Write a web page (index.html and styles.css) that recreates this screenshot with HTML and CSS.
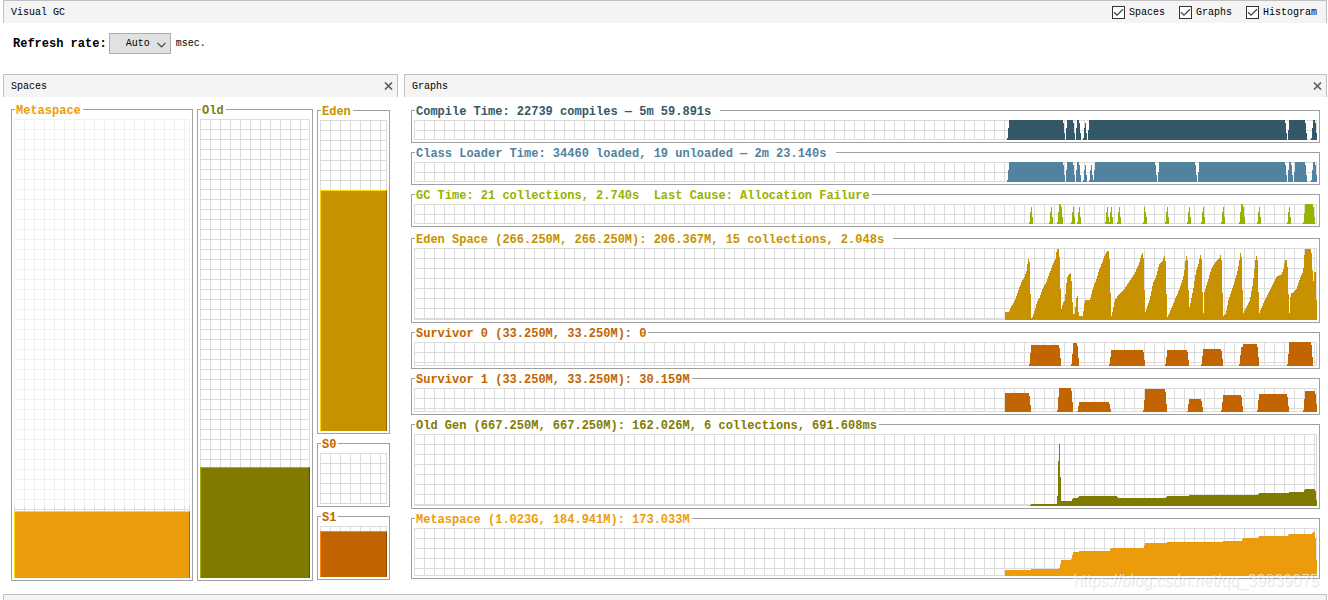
FILE: index.html
```html
<!DOCTYPE html>
<html lang="en">
<head>
<meta charset="utf-8">
<title>Visual GC</title>
<link rel="stylesheet" href="styles.css">
</head>
<body>
<div class="app">
  <header class="bar">
    <h1 class="bar-title">Visual GC</h1>
    <div class="toggles">
      <label class="toggle"><input class="check" type="checkbox" checked>Spaces</label>
      <label class="toggle"><input class="check" type="checkbox" checked>Graphs</label>
      <label class="toggle"><input class="check" type="checkbox" checked>Histogram</label>
    </div>
  </header>

  <div class="toolbar">
    <label class="rate-label" for="rate">Refresh rate:</label>
    <span class="combo">
      <select class="combo-select" id="rate"><option>Auto</option><option>100</option><option>500</option></select>
      <svg class="combo-arrow" width="9" height="6" viewBox="0 0 9 6" aria-hidden="true"><path d="M.5.8 4.5 4.8 8.5.8" fill="none" stroke="#444" stroke-width="1.2"/></svg>
    </span>
    <span>msec.</span>
  </div>

  <main class="panels">
    <section class="panel">
      <div class="bar">
        <h2 class="bar-title">Spaces</h2>
        <button class="close" type="button" aria-label="Close Spaces"><svg width="9" height="8" viewBox="0 0 9 8"><path d="M1 .5 8 7.5M8 .5 1 7.5" stroke="#606060" stroke-width="1.7"/></svg></button>
      </div>
      <div class="spaces">
        <fieldset class="group meta">
          <legend class="caption">Metaspace</legend>
          <div class="plot reserved"><div class="plot committed" style="height:15.7%"></div><div class="fill" style="height:14.6%"></div></div>
        </fieldset>
        <fieldset class="group old">
          <legend class="caption">Old</legend>
          <div class="plot"><div class="fill" style="height:24.2%"></div></div>
        </fieldset>
        <div class="young">
          <fieldset class="group eden">
            <legend class="caption">Eden</legend>
            <div class="plot"><div class="fill" style="height:77.5%"></div></div>
          </fieldset>
          <fieldset class="group survivor">
            <legend class="caption">S0</legend>
            <div class="plot"></div>
          </fieldset>
          <fieldset class="group survivor">
            <legend class="caption">S1</legend>
            <div class="plot"><div class="fill" style="height:90.2%"></div></div>
          </fieldset>
        </div>
      </div>
    </section>

    <section class="panel">
      <div class="bar">
        <h2 class="bar-title">Graphs</h2>
        <button class="close" type="button" aria-label="Close Graphs"><svg width="9" height="8" viewBox="0 0 9 8"><path d="M1 .5 8 7.5M8 .5 1 7.5" stroke="#606060" stroke-width="1.7"/></svg></button>
      </div>
      <div class="graphs">
        <div class="graph-set">
          <fieldset class="group compile">
            <legend class="caption">Compile Time: 22739 compiles — 5m 59.891s </legend>
            <div class="plot short"><svg class="series" width="317" height="20" viewBox="0 0 951 60"><path d="M21 60V54H24V24H27V0H189V9H192V39H195V60zM198 60V24H201V0H219V9H222V39H225V60zM228 60V24H231V0H237V9H240V39H243V60zM249 60V54H252V24H255V9H258V39H261V60zM264 60V30H267V0H855V9H858V39H861V60zM864 60V30H867V0H915V9H918V39H921V60zM933 60V54H936V24H939V0H945V9H948V39H951V60z"/></svg></div>
          </fieldset>
          <fieldset class="group loader">
            <legend class="caption">Class Loader Time: 34460 loaded, 19 unloaded — 2m 23.140s </legend>
            <div class="plot short"><svg class="series" width="317" height="20" viewBox="0 0 951 60"><path d="M21 60V54H24V24H27V0H189V9H192V39H195V60zM198 60V24H201V0H219V9H222V39H225V60zM228 60V24H231V0H237V9H240V39H243V60zM249 60V54H252V24H255V9H258V39H261V60zM267 60V54H270V24H273V9H276V39H279V54H282V24H285V0H465V9H468V39H471V60zM474 60V30H477V0H585V9H588V39H591V60zM594 60V30H597V0H855V9H858V39H861V60zM864 60V24H867V0H873V9H876V39H879V60zM882 60V30H885V0H915V9H918V39H921V60zM933 60V54H936V24H939V0H945V9H948V39H951V60z"/></svg></div>
          </fieldset>
          <fieldset class="group gc">
            <legend class="caption">GC Time: 21 collections, 2.740s  Last Cause: Allocation Failure</legend>
            <div class="plot short"><svg class="series" width="317" height="20" viewBox="0 0 951 60"><path d="M87 60v-6h3v-30h3v-15h3v30h3v21zM147 60v-6h3v-30h3v-15h3v30h3v21zM171 60v-6h3v-30h3V0h6v9h3v30h3v21zM213 60v-6h3v-30h3v-15h3v30h3v21zM231 60v-6h3v-30h3v-15h3v30h3v21zM315 60v-6h3v-30h3v-15h3v30h3v21zM327 60v-6h3v-30h3v-15h3v30h3v21zM351 60v-6h3v-30h3v-15h3v30h3v21zM429 60v-6h3v-45h3v15h3v15h3v21zM495 60v-6h3v-30h3v-15h3v30h3v21zM561 60v-6h3v-30h3v-15h3v30h3v21zM603 60v-6h3v-30h3v-15h3v30h3v21zM663 60v-6h3v-30h3v-15h3v30h3v21zM717 60v-6h3v-30h3V0h6v9h3v30h3v21zM771 60v-6h3v-30h3v-15h3v30h3v21zM861 60v-6h3v-30h3v-15h3v30h3v21zM909 60v-6h3V27h3V0h24v9h3v30h3v21z"/></svg></div>
          </fieldset>
        </div>
        <div class="graph-set">
          <fieldset class="group eden">
            <legend class="caption">Eden Space (266.250M, 266.250M): 206.367M, 15 collections, 2.048s </legend>
            <div class="plot tall"><svg class="series" width="317" height="72" viewBox="0 0 951 216"><path d="M15 216V192H27L33 177L45 158L54 129L66 98L72 91L81 66L84 33H87V42H90V138H93V210L99 204L105 186L111 162L120 147L129 118L138 107L150 72L159 48L166 36L171 3H177V27H180V123H183V189L189 165L195 156L198 120L201 90L204 84L211 75H214V87L217 150L219 198H225L228 159L231 144H234V180L237 204H249L252 174L255 156H270L276 132L282 111L290 93L297 66L306 46L315 21L321 9H327V33H330V135H333V210L339 186L345 156L350 148L372 124L390 97L405 75L417 47L426 15H429V30H432V126H435V195L450 153L459 106L468 87L477 50L489 36L492 24H495V39H498V138H501V210L507 198L522 162L540 120L549 93L555 57L558 24H561V36H564V126H567V186L570 171L579 129L588 72L597 44L600 21H603V33H606V132H609V195H612V138L621 107L633 66L645 44L660 27V21H663V36H666V135H669V207L678 195L687 150L699 117L711 75L718 42L720 15H723V27H726V126H729V198L735 186L750 156L759 105L765 48L768 24H771V36H774V132H777V198L783 183L795 156L813 120L828 90L834 83L843 81L850 66L855 36H861V57H864V138H867V195H870V162L873 135H879L891 120L903 84L910 72V66L915 3H933V15H936V66H939V99H942V72H948V156H951V216z"/></svg></div>
          </fieldset>
          <fieldset class="group survivor">
            <legend class="caption">Survivor 0 (33.250M, 33.250M): 0</legend>
            <div class="plot medium"><svg class="series" width="317" height="24" viewBox="0 0 951 72"><path d="M87 72V66H90V33H93V9H177V18H180V48H183V72zM213 72V66H216V36H219V3H231V12H234V48H237V72zM327 72V66H330V45H333V24H429V30H432V54H435V72zM495 72V66H498V45H501V24H561V30H564V54H567V72zM603 72V66H606V42H609V21H663V27H666V51H669V72zM717 72V66H720V39H723V15H729V6H771V15H774V45H777V72zM861 72V66H864V36H867V0H933V9H936V45H939V72z"/></svg></div>
          </fieldset>
          <fieldset class="group survivor">
            <legend class="caption">Survivor 1 (33.250M, 33.250M): 30.159M</legend>
            <div class="plot medium"><svg class="series" width="317" height="24" viewBox="0 0 951 72"><path d="M15 72V15H87V24H90V51H93V72zM171 72V66H174V27H177V0H213V9H216V42H219V72zM231 72V69H234V54H237V42H327V48H330V63H333V72zM429 72V66H432V36H435V3H495V12H498V48H501V72zM561 72V69H564V48H567V33H603V39H606V57H609V72zM663 72V66H666V42H669V21H723V27H726V54H729V72zM771 72V66H774V36H777V18H861V27H864V54H867V72zM909 72V66H912V33H915V9H945V18H948V48H951V72z"/></svg></div>
          </fieldset>
          <fieldset class="group old">
            <legend class="caption">Old Gen (667.250M, 667.250M): 162.026M, 6 collections, 691.608ms</legend>
            <div class="plot tall"><svg class="series" width="317" height="72" viewBox="0 0 951 216"><path d="M90 216V213H93V210H171V186H174V81H177V30H180V129H183V201H216V195H219V192H234V189H237V186H351V189H354V192H498V189H501V186H567V183H774V180H777V177H867V174H912V168H915V165H945V171H948V198H951V216z"/></svg></div>
          </fieldset>
          <fieldset class="group meta">
            <legend class="caption">Metaspace (1.023G, 184.941M): 173.033M</legend>
            <div class="plot large"><svg class="series" width="317" height="48" viewBox="0 0 951 144"><path d="M15 144V126H93V123H177V120H180V108H183V96H213V93H216V81H219V72H237V69H330V63H333V60H432V51H435V45H501V42H669V39H726V33H729V30H774V27H777V24H864V21H867V18H936V15H939V12H945V30H948V96H951V144z"/></svg></div>
          </fieldset>
        </div>
      </div>
    </section>
  </main>

  <footer class="next-panel"></footer>
  <span class="watermark">https://blog.csdn.net/qq_39839075</span>
</div>
</body>
</html>
```

FILE: styles.css
```css
* {
  box-sizing: border-box;
}

body {
  margin: 0;
  background: #fff;
  color: #000;
  font: 10px/14px "Liberation Mono", monospace;
}

.app {
  position: relative;
  display: flex;
  flex-direction: column;
  min-height: 100vh;
  padding: 0 1px 0 3px;
}

.bar {
  display: flex;
  align-items: center;
  justify-content: space-between;
  height: 23px;
  padding: 1px 4px 0 7px;
  border: 1px solid #c0c0c0;
  border-bottom: 0;
  background: #f4f4f4;
}

.bar-title {
  margin: 0;
  padding-top: 1px;
  font-size: 10px;
  font-weight: normal;
}

.toggles {
  display: flex;
  gap: 14px;
  padding-right: 5px;
}

.toggle {
  display: flex;
  align-items: center;
  gap: 4px;
  line-height: 16px;
}

.check {
  appearance: none;
  width: 13px;
  height: 13px;
  margin: 0;
  border: 1px solid #333;
  background: #fff;
}

.check:checked {
  background: #fff url("data:image/svg+xml,%3Csvg xmlns='http://www.w3.org/2000/svg' width='11' height='11'%3E%3Cpath d='M1 5.2 4 8.2 10 2.2' fill='none' stroke='%23444' stroke-width='1.3'/%3E%3C/svg%3E") center no-repeat;
}

.toolbar {
  display: flex;
  align-items: center;
  gap: 2px;
  padding: 10px 10px 20px;
  line-height: 16px;
}

.rate-label {
  font-size: 12px;
  font-weight: bold;
}

.combo {
  position: relative;
  display: flex;
  margin-right: 3px;
}

.combo-select {
  appearance: none;
  width: 62px;
  height: 21px;
  padding: 1px 0 0 16px;
  border: 1px solid #adadad;
  border-radius: 0;
  background: #e1e1e1;
  color: #000;
  font: inherit;
}

.combo-arrow {
  position: absolute;
  top: 9px;
  right: 5px;
  pointer-events: none;
}

.panels {
  display: grid;
  grid-template-columns: 395fr 923fr;
  gap: 6px;
}

.panel {
  display: flex;
  flex-direction: column;
  min-width: 0;
}

.close {
  display: flex;
  padding: 0 0 2px;
  border: 0;
  background: none;
}

.spaces {
  flex: 1;
  display: grid;
  grid-template-columns: 182fr 116fr 73fr;
  gap: 4px;
  padding: 6px 8px 0;
}

.young {
  display: grid;
  grid-template-rows: 1fr 70px 70px;
  gap: 3px;
  padding: 1px 0;
}

.graphs {
  display: grid;
  gap: 5px;
  padding: 7px 7px 2px;
}

.graph-set {
  display: grid;
  gap: 3px;
  min-width: 0;
}

.group {
  display: flex;
  flex-direction: column;
  min-width: 0;
  margin: 0;
  padding: 3px 2px 2px;
  border: 1px solid #a0a0a0;
}

.caption {
  margin-left: 1px;
  padding: 4px 2px 0 1px;
  color: var(--ink);
  font-size: 12px;
  font-weight: bold;
  line-height: 9px;
  white-space: pre;
}

.plot {
  --line: #dcdcdc;
  position: relative;
  flex: 1 0 auto;
  display: flex;
  flex-direction: column;
  justify-content: flex-end;
  background:
    linear-gradient(var(--line), var(--line)) right / 1px 100% no-repeat,
    linear-gradient(var(--line), var(--line)) bottom / 100% 1px no-repeat,
    linear-gradient(to right, var(--line) 1px, transparent 1px) 0 0 / 10px 10px,
    linear-gradient(to bottom, var(--line) 1px, transparent 1px) 0 0 / 10px 10px;
}

.reserved {
  --line: #f0f0f0;
}

.committed {
  --line: #dcdcdc;
  position: absolute;
  right: 0;
  bottom: 0;
  left: 0;
  background:
    linear-gradient(var(--line), var(--line)) right / 1px 100% no-repeat,
    linear-gradient(var(--line), var(--line)) 0 3px / 100% 1px no-repeat,
    linear-gradient(to right, var(--line) 1px, transparent 1px) 0 0 / 10px 10px;
}

.short {
  height: 20px;
}

.medium {
  height: 24px;
}

.large {
  height: 48px;
}

.tall {
  height: 72px;
}

.fill {
  position: relative;
  border: 1px solid var(--light);
  border-right-color: var(--dark);
  border-bottom: 0;
  background: var(--ink);
}

.series {
  align-self: flex-end;
  fill: var(--ink);
  shape-rendering: crispEdges;
}

.compile {
  --ink: #355869;
}

.loader {
  --ink: #5182a0;
}

.gc {
  --ink: #98b200;
}

.eden {
  --ink: #c79100;
  --light: #ffd800;
  --dark: #8b6500;
}

.survivor {
  --ink: #c26400;
  --light: #ff8c00;
  --dark: #884600;
}

.old {
  --ink: #807b00;
  --light: #b3ac00;
  --dark: #5a5600;
}

.meta {
  --ink: #ec9c0a;
  --light: #ffd800;
  --dark: #a56d07;
}

.next-panel {
  flex: 1;
  min-height: 6px;
  margin-top: 13px;
  border: 1px solid #c0c0c0;
  border-bottom: 0;
  background: #f4f4f4;
}

.watermark {
  position: absolute;
  right: 9px;
  bottom: 9px;
  color: rgba(255, 255, 255, 0.6);
  font: 16px/20px "Liberation Sans", Arial, sans-serif;
  text-shadow: 1px 1px 1px rgba(0, 0, 0, 0.12);
  pointer-events: none;
}
```
